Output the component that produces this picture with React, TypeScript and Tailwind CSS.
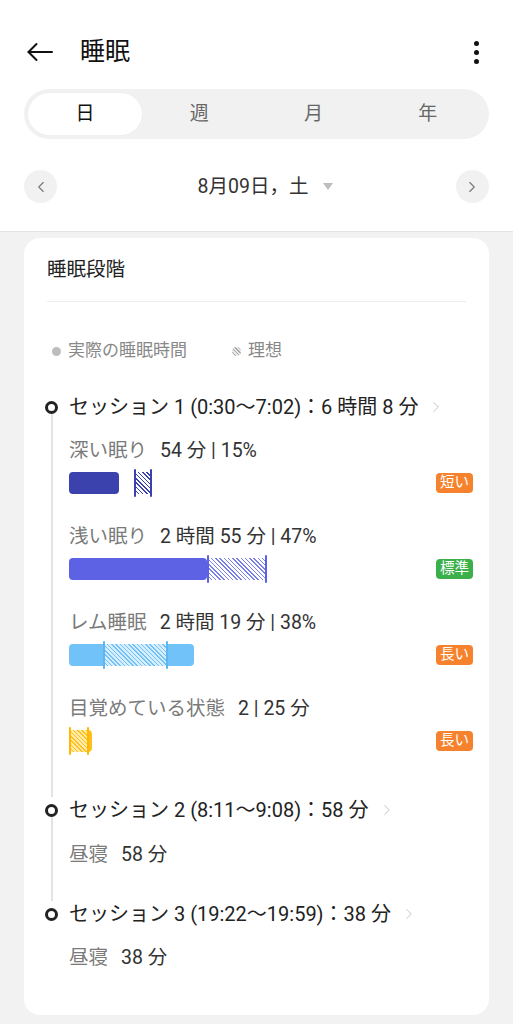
import { ChevronLeft, ChevronRight } from "lucide-react";

type Stage = {
  label: string;
  value: string;
  actual: number;
  idealLeft: number;
  idealWidth: number;
  solid: string;
  hatch: string;
  line: string;
  badge: string;
  badgeColor: string;
};

const stages: Stage[] = [
  {
    label: "深い眠り",
    value: "54 分 | 15%",
    actual: 50,
    idealLeft: 65,
    idealWidth: 18,
    solid: "bg-[#3b42ad]",
    hatch: "bg-[repeating-linear-gradient(45deg,#3b42ad_0px,#3b42ad_1px,#ffffff_1px,#ffffff_3px)]",
    line: "bg-[#3b42ad]",
    badge: "短い",
    badgeColor: "bg-[#f7822d]",
  },
  {
    label: "浅い眠り",
    value: "2 時間 55 分 | 47%",
    actual: 138,
    idealLeft: 138,
    idealWidth: 60,
    solid: "bg-[#5c62e3]",
    hatch: "bg-[repeating-linear-gradient(45deg,#7a80ea_0px,#7a80ea_1px,#ffffff_1px,#ffffff_3px)]",
    line: "bg-[#5c62e3]",
    badge: "標準",
    badgeColor: "bg-[#3aaf4a]",
  },
  {
    label: "レム睡眠",
    value: "2 時間 19 分 | 38%",
    actual: 125,
    idealLeft: 34,
    idealWidth: 65,
    solid: "bg-[#72c2fa]",
    hatch: "bg-[repeating-linear-gradient(45deg,#72c2fa_0px,#72c2fa_1px,#d6edfd_1px,#d6edfd_3px)]",
    line: "bg-[#5fb5f2]",
    badge: "長い",
    badgeColor: "bg-[#f7822d]",
  },
  {
    label: "目覚めている状態",
    value: "2 | 25 分",
    actual: 23,
    idealLeft: 0,
    idealWidth: 20,
    solid: "bg-[#ffc01e]",
    hatch: "bg-[repeating-linear-gradient(45deg,#ffc01e_0px,#ffc01e_1px,#ffeaa8_1px,#ffeaa8_3px)]",
    line: "bg-[#ffb800]",
    badge: "長い",
    badgeColor: "bg-[#f7822d]",
  },
];

function StageBar({ s }: { s: Stage }) {
  return (
    <div className="mb-[31px]">
      <div className="flex h-6 items-center gap-[13px] text-[19.5px] leading-6">
        <span className="text-[#7a7a7a]">{s.label}</span>
        <span className="text-[#333]">{s.value}</span>
      </div>
      <div className="-mr-[7px] mt-[9px] flex h-[22px] items-center justify-between">
        <div className="relative h-[22px] w-[220px]">
          <div className={`h-full rounded-[4px] ${s.solid}`} style={{ width: s.actual }} />
          {/* ideal range */}
          <div className="absolute -top-[3px] -bottom-[3px]" style={{ left: s.idealLeft, width: s.idealWidth }}>
            <div className={`absolute inset-x-0 top-[3px] bottom-[3px] ${s.hatch}`} />
            <div className={`absolute left-0 top-0 bottom-0 w-[2px] rounded-full ${s.line}`} />
            <div className={`absolute right-0 top-0 bottom-0 w-[2px] rounded-full ${s.line}`} />
          </div>
        </div>
        <span className={`flex h-5 items-center rounded-[4px] px-[4px] text-[14.5px] leading-5 text-white ${s.badgeColor}`}>
          {s.badge}
        </span>
      </div>
    </div>
  );
}

function SessionHead({ text }: { text: string }) {
  return (
    <div className="flex h-[26px] items-center gap-[9px]">
      <span className="text-[20px] leading-[26px] text-[#222]">{text}</span>
      <ChevronRight className="h-[18px] w-[18px] text-[#c4c4c4]" strokeWidth={1.3} />
    </div>
  );
}

function Dot({ last }: { last?: boolean }) {
  return (
    <div className="flex w-[13px] flex-col items-center">
      <div className="mt-[6.5px] h-[13px] w-[13px] shrink-0 rounded-full border-[3px] border-[#222]" />
      {!last && <div className="w-[2px] flex-1 bg-[#e3e3e3]" />}
    </div>
  );
}

export default function App() {
  return (
    <div
      className="min-h-[1024px] w-[513px] bg-[#f2f2f2]"
      style={{ fontFamily: 'Roboto, "Noto Sans CJK JP", sans-serif' }}
    >
      {/* HEADER */}
      <div className="border-b border-[#e3e3e3] bg-white pb-[28px]">
        <div className="mt-6 flex h-14 items-center pl-[27px] pr-[34px]">
          <svg width="26" height="20" viewBox="0 0 26 20" fill="none" stroke="#111" strokeWidth="2" strokeLinecap="round" strokeLinejoin="round">
            <path d="M25 10H1.5" />
            <path d="M9.5 2L1.5 10l8 8" />
          </svg>
          <span className="ml-[27px] text-[25px] leading-8 text-[#111]">睡眠</span>
          <div className="ml-auto flex flex-col gap-[4px]">
            <span className="h-[5px] w-[5px] rounded-full bg-[#111]" />
            <span className="h-[5px] w-[5px] rounded-full bg-[#111]" />
            <span className="h-[5px] w-[5px] rounded-full bg-[#111]" />
          </div>
        </div>

        {/* TABS */}
        <div className="mx-6 mt-[9px] grid h-[50px] grid-cols-4 rounded-full bg-[#f1f1f1] p-1 text-[19px]">
          <div className="flex items-center justify-center rounded-full bg-white text-[#111] shadow-[0_0_2px_rgba(0,0,0,0.04)]">日</div>
          <div className="flex items-center justify-center text-[#666]">週</div>
          <div className="flex items-center justify-center text-[#666]">月</div>
          <div className="flex items-center justify-center text-[#666]">年</div>
        </div>

        {/* DATE */}
        <div className="mx-6 mt-[31px] flex h-[33px] items-center justify-between">
          <div className="flex h-[33px] w-[33px] items-center justify-center rounded-full bg-[#f1f1f1]">
            <ChevronLeft className="h-[18px] w-[18px] text-[#777]" strokeWidth={1.5} />
          </div>
          <div className="flex items-center gap-[15px] pl-[18px] text-[19.5px] text-[#333]">
            <span>8月09日，土</span>
            <span className="h-0 w-0 border-x-[5px] border-t-[7px] border-x-transparent border-t-[#bdbdbd]" />
          </div>
          <div className="flex h-[33px] w-[33px] items-center justify-center rounded-full bg-[#f1f1f1]">
            <ChevronRight className="h-[18px] w-[18px] text-[#777]" strokeWidth={1.5} />
          </div>
        </div>
      </div>

      {/* CARD */}
      <div className="mx-6 mt-[6px] rounded-2xl bg-white px-[23px] pb-[45px] pt-5">
        <div className="text-[19.5px] leading-6 text-[#222]">睡眠段階</div>
        <div className="mt-[19px] h-px bg-[#ececec]" />

        {/* LEGEND */}
        <div className="mt-[38px] flex h-[22px] items-center text-[17px] text-[#888]">
          <span className="ml-[5px] h-[9px] w-[9px] rounded-full bg-[#bdbdbd]" />
          <span className="ml-[7px]">実際の睡眠時間</span>
          <span className="ml-[45px] h-[9px] w-[9px] rounded-full bg-[repeating-linear-gradient(45deg,#a8a8a8_0px,#a8a8a8_1px,#e8e8e8_1px,#e8e8e8_2.5px)]" />
          <span className="ml-[7px]">理想</span>
        </div>

        {/* TIMELINE */}
        <div className="-ml-[2px] mt-[32px]">
          <div className="flex gap-[11px]">
            <Dot />
            <div className="flex-1 pb-[14px]">
              <SessionHead text="セッション 1 (0:30〜7:02)：6 時間 8 分" />
              <div className="mt-[19px]">
                {stages.map((s) => (
                  <StageBar key={s.label} s={s} />
                ))}
              </div>
            </div>
          </div>

          <div className="flex gap-[11px]">
            <Dot />
            <div className="flex-1 pb-[34px]">
              <SessionHead text="セッション 2 (8:11〜9:08)：58 分" />
              <div className="mt-5 flex h-6 items-center gap-[13px] text-[19.5px]">
                <span className="text-[#7a7a7a]">昼寝</span>
                <span className="text-[#333]">58 分</span>
              </div>
            </div>
          </div>

          <div className="flex gap-[11px]">
            <Dot last />
            <div className="flex-1">
              <SessionHead text="セッション 3 (19:22〜19:59)：38 分" />
              <div className="mt-[19px] flex h-6 items-center gap-[13px] text-[19.5px]">
                <span className="text-[#7a7a7a]">昼寝</span>
                <span className="text-[#333]">38 分</span>
              </div>
            </div>
          </div>
        </div>
      </div>
    </div>
  );
}
